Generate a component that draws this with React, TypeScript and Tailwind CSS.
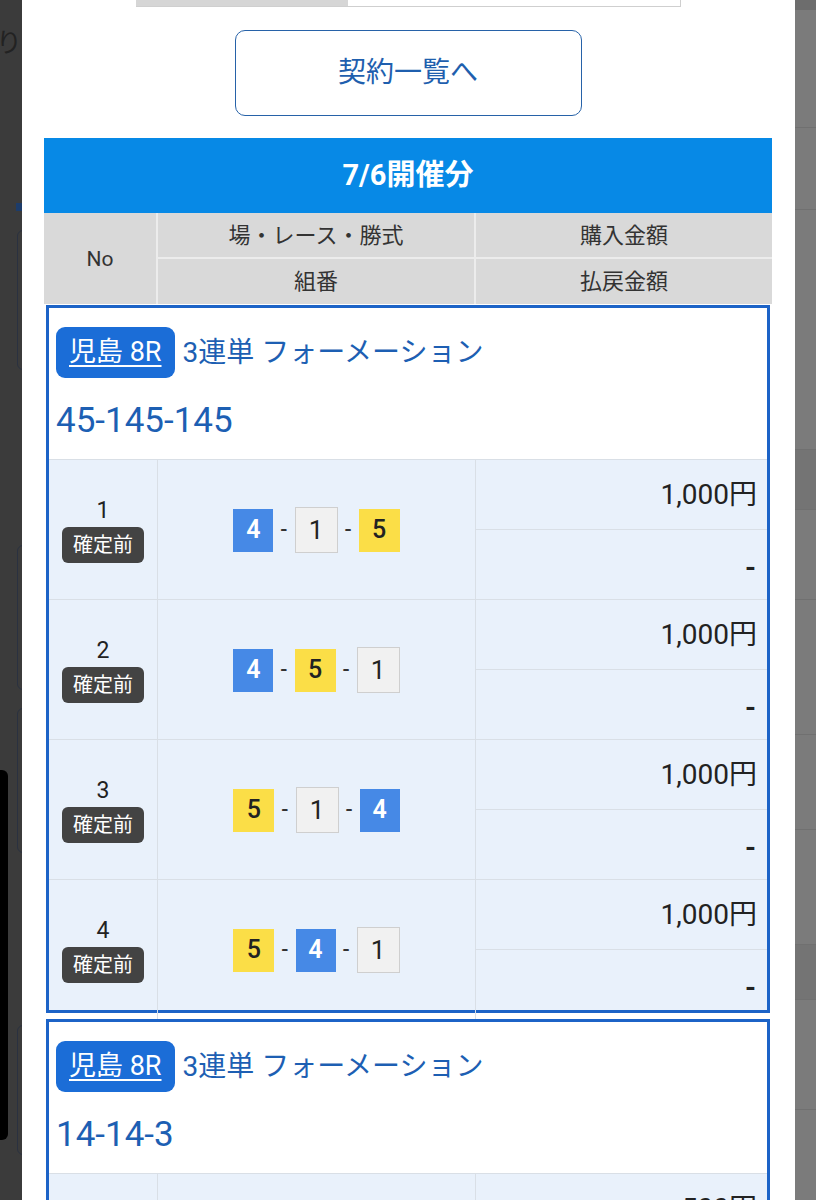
import React from 'react';

type Row = { no: number; combo: number[]; amount: string };

const font = { fontFamily: "Roboto, 'Noto Sans CJK JP', sans-serif" };

const rows1: Row[] = [
  { no: 1, combo: [4, 1, 5], amount: '1,000円' },
  { no: 2, combo: [4, 5, 1], amount: '1,000円' },
  { no: 3, combo: [5, 1, 4], amount: '1,000円' },
  { no: 4, combo: [5, 4, 1], amount: '1,000円' },
];

function NumBox({ n }: { n: number }) {
  // boat colours: 1 white, 4 blue, 5 yellow
  if (n === 4) {
    return <span className="flex h-[43px] w-[40px] items-center justify-center bg-[#4689e6] text-[25px] font-semibold text-white">4</span>;
  }
  if (n === 5) {
    return <span className="flex h-[43px] w-[41px] items-center justify-center bg-[#fbde47] text-[25px] font-medium text-[#222]">5</span>;
  }
  return <span className="flex h-[46px] w-[43px] items-center justify-center border border-[#cfcfcf] bg-[#f1f1f1] text-[26px] text-[#222]">{n}</span>;
}

function BetRow({ row, last }: { row: Row; last?: boolean }) {
  return (
    <div className={`grid grid-cols-[109px_318px_1fr] border-t border-[#d9dfe6] bg-[#e9f1fb] ${last ? 'h-[131px]' : 'h-[140px]'}`}>
      <div className="flex flex-col items-center justify-center border-r border-[#d9dfe6]">
        <span className="text-[23px] leading-[28px] text-[#222]">{row.no}</span>
        <span className="mt-[2px] flex h-[36px] items-center rounded-[6px] bg-[#434343] px-[11px] text-[20px] text-white">確定前</span>
      </div>
      <div className="flex items-center justify-center gap-[7px] border-r border-[#d9dfe6]">
        <NumBox n={row.combo[0]} />
        <span className="text-[21px] font-medium text-[#333]">-</span>
        <NumBox n={row.combo[1]} />
        <span className="text-[21px] font-medium text-[#333]">-</span>
        <NumBox n={row.combo[2]} />
      </div>
      <div className="flex flex-col">
        <div className="flex h-[70px] shrink-0 items-center justify-end border-b border-[#d9dfe6] pr-[10px] text-[28px] text-[#222]">{row.amount}</div>
        <div className="flex h-[70px] shrink-0 items-center justify-end pr-[11px] pt-[6px] text-[28px] font-bold text-[#222]">-</div>
      </div>
    </div>
  );
}

function BetCard({ combo, rows, cut }: { combo: string; rows: Row[]; cut?: boolean }) {
  return (
    <div className="mx-[2px] border-[3px] border-[#1c63c7]">
      <div className="bg-white pb-[17px] pl-[7px] pt-[19px]">
        <div className="flex items-center gap-[8px]">
          <span className="flex h-[51px] items-center rounded-[9px] bg-[#1b6dd7] px-[13px] text-[27px] text-white underline underline-offset-[4px]">児島 8R</span>
          <span className="text-[28px] text-[#1d5fb3]">3連単 フォーメーション</span>
        </div>
        <div className="mt-[22px] text-[35px] leading-[42px] text-[#1d5fb3]">{combo}</div>
      </div>
      {rows.map((r, i) => (
        <BetRow key={r.no} row={r} last={!cut && i === rows.length - 1} />
      ))}
    </div>
  );
}

export default function App() {
  return (
    <div className="flex h-[1200px] w-[816px] overflow-hidden" style={font}>
      {/* dimmed page behind the modal, left side */}
      <div className="relative w-[22px] shrink-0 overflow-hidden bg-[#3b3b3b]">
        <span className="absolute left-[-4px] top-[24px] text-[26px] text-[#222]">り</span>
        <div className="absolute left-[16px] top-[203px] h-[8px] w-[6px] bg-[#1d3c6a]" />
        <div className="absolute left-[17px] top-[230px] h-[140px] w-[20px] rounded-l-[6px] border border-[#2a3140]" />
        <div className="absolute left-[17px] top-[545px] h-[145px] w-[20px] rounded-l-[6px] border border-[#2a3140]" />
        <div className="absolute left-[17px] top-[708px] h-[145px] w-[20px] rounded-l-[6px] border border-[#2a3140]" />
        <div className="absolute left-[-6px] top-[770px] h-[370px] w-[14px] rounded-[6px] bg-black" />
        <div className="absolute left-[17px] top-[1025px] h-[130px] w-[20px] rounded-l-[6px] border border-[#2a3140]" />
      </div>

      {/* modal */}
      <div className="w-[773px] shrink-0 bg-white pl-[22px] pr-[23px]">
        <div className="mx-auto flex h-[7px] w-[545px] border-b border-[#cfcfcf]">
          <div className="w-[212px] bg-[#d6d6d6]" />
          <div className="flex-1 border-r border-[#cfcfcf] bg-white" />
        </div>

        <button className="mx-auto mt-[23px] flex h-[86px] w-[347px] items-center justify-center rounded-[10px] border-[1.5px] border-[#2762a8] bg-white text-[28px] text-[#1f5fae]">
          契約一覧へ
        </button>

        <div className="mt-[22px]">
          <div className="flex h-[75px] items-center justify-center bg-[#0789e6] text-[29px] font-bold text-white">
            7/6開催分
          </div>
          <div className="grid grid-cols-[114px_318px_1fr] bg-[#d9d9d9] text-[22px] text-[#333]">
            <div className="row-span-2 flex items-center justify-center border-r-2 border-[#ececec] pt-[2px] text-[21px]">No</div>
            <div className="flex h-[46px] items-center justify-center border-b-2 border-r-2 border-[#ececec]">場・レース・勝式</div>
            <div className="flex h-[46px] items-center justify-center border-b-2 border-[#ececec]">購入金額</div>
            <div className="flex h-[45px] items-center justify-center border-r-2 border-[#ececec]">組番</div>
            <div className="flex h-[45px] items-center justify-center">払戻金額</div>
          </div>

          <div className="flex flex-col gap-[6px] pt-[1px]">
            <BetCard combo="45-145-145" rows={rows1} />
            <BetCard combo="14-14-3" rows={[{ no: 1, combo: [1, 4, 3], amount: '500円' }]} cut />
          </div>
        </div>
      </div>

      {/* dimmed page, right side */}
      <div className="flex flex-1 flex-col bg-[#7b7b7b]">
        <div className="h-[10px] bg-[#6d6d6d]" />
        <div className="h-[118px] border-b border-[#707070]" />
        <div className="h-[82px] border-b border-[#707070]" />
        <div className="h-[240px] border-b border-[#707070]" />
        <div className="h-[60px] border-b border-[#707070] bg-[#747474]" />
        <div className="h-[90px] border-b border-[#707070]" />
        <div className="h-[135px] border-b border-[#707070]" />
        <div className="h-[95px] border-b border-[#707070]" />
        <div className="h-[115px] border-b border-[#707070]" />
        <div className="h-[55px] border-b border-[#707070] bg-[#747474]" />
        <div className="h-[110px] border-b border-[#707070]" />
      </div>
    </div>
  );
}
